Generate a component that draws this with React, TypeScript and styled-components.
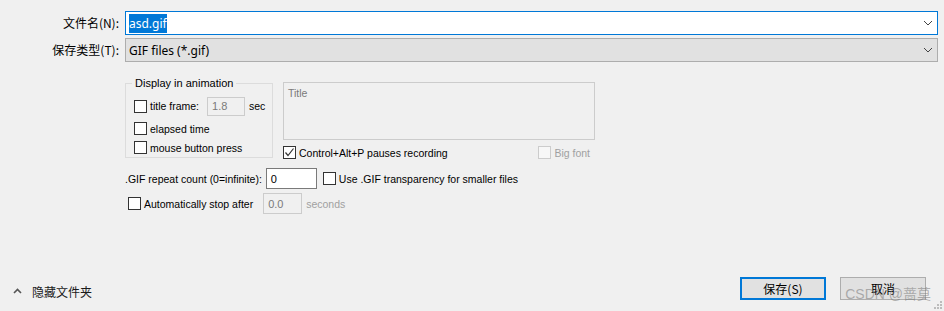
import React from "react";
import styled, { createGlobalStyle } from "styled-components";

const GlobalStyle = createGlobalStyle`
  html, body {
    margin: 0;
    padding: 0;
    background: #f0f0f0;
  }
  body {
    font-family: "Noto Sans", "Noto Sans CJK SC", sans-serif;
    color: #000;
  }
`;

const Dialog = styled.div`
  position: relative;
  width: 944px;
  height: 311px;
  box-sizing: border-box;
  display: flex;
  flex-direction: column;
  background: #f0f0f0;
`;

const FieldGrid = styled.div`
  display: grid;
  grid-template-columns: 119px 1fr;
  column-gap: 6px;
  row-gap: 3px;
  padding: 11px 6px 0 0;
`;

const FieldLabel = styled.label`
  text-align: right;
  font-family: "Noto Sans CJK SC", "Noto Sans", sans-serif;
  font-size: 12px;
  line-height: 24px;
  white-space: nowrap;
`;

const Combo = styled.div<{ $focused?: boolean }>`
  height: 24px;
  box-sizing: border-box;
  display: flex;
  align-items: center;
  padding: 0 4px 0 3px;
  border: 1px solid ${(p) => (p.$focused ? "#0078d7" : "#adadad")};
  background: ${(p) => (p.$focused ? "#ffffff" : "#e1e1e1")};
  font-family: "Noto Sans", "Noto Sans CJK SC", sans-serif;
  font-size: 12px;
`;

const ComboText = styled.span`
  flex: 1;
  white-space: nowrap;
`;

const Selected = styled.span`
  background: #0078d7;
  color: #fff;
  padding: 1px 0;
`;

const Chevron = () => (
  <svg width="10" height="6" viewBox="0 0 10 6">
    <path d="M1 1 L5 5 L9 1" fill="none" stroke="#444" strokeWidth="1" />
  </svg>
);

const Options = styled.div`
  font-family: "Liberation Sans", Arial, sans-serif;
  font-size: 10.5px;
  padding-left: 125px;
`;

const UpperRow = styled.div`
  display: flex;
  gap: 10px;
  margin-top: 20px;
`;

const GroupBox = styled.div`
  position: relative;
  width: 148px;
  height: 75px;
  margin-top: 1px;
  box-sizing: border-box;
  border: 1px solid #dcdcdc;
  padding: 12px 0 0 8px;
`;

const Legend = styled.span`
  position: absolute;
  top: -7px;
  left: 6px;
  padding: 0 3px;
  background: #f0f0f0;
  line-height: 13px;
  font-size: 11px;
`;

const CheckRow = styled.div<{ $h?: number; $gap?: number }>`
  display: flex;
  align-items: center;
  height: ${(p) => p.$h ?? 19}px;
  margin-top: ${(p) => p.$gap ?? 0}px;
  white-space: nowrap;
`;

const Box = styled.span<{ $disabled?: boolean }>`
  width: 13px;
  height: 13px;
  box-sizing: border-box;
  flex-shrink: 0;
  display: inline-flex;
  align-items: center;
  justify-content: center;
  border: 1px solid ${(p) => (p.$disabled ? "#cccccc" : "#333333")};
  background: ${(p) => (p.$disabled ? "#f7f7f7" : "#ffffff")};
  margin-right: 3px;
`;

const CheckText = styled.span<{ $disabled?: boolean }>`
  color: ${(p) => (p.$disabled ? "#a0a0a0" : "#000")};
`;

const Check = ({ checked, disabled, label }: { checked?: boolean; disabled?: boolean; label: string }) => (
  <>
    <Box $disabled={disabled}>
      {checked && (
        <svg width="11" height="11" viewBox="0 0 11 11">
          <path d="M1.5 5.5 L4 8.5 L9.5 1.5" fill="none" stroke="#333" strokeWidth="1.2" />
        </svg>
      )}
    </Box>
    <CheckText $disabled={disabled}>{label}</CheckText>
  </>
);

const NumBox = styled.div<{ $w: number; $h: number; $disabled?: boolean }>`
  width: ${(p) => p.$w}px;
  height: ${(p) => p.$h}px;
  box-sizing: border-box;
  display: flex;
  align-items: center;
  padding-left: 4px;
  border: 1px solid ${(p) => (p.$disabled ? "#cccccc" : "#7a7a7a")};
  background: ${(p) => (p.$disabled ? "#f0f0f0" : "#ffffff")};
  color: ${(p) => (p.$disabled ? "#7a7a7a" : "#000")};
  flex-shrink: 0;
  font-size: 11px;
`;

const Unit = styled.span<{ $disabled?: boolean }>`
  margin-left: 4px;
  color: ${(p) => (p.$disabled ? "#a0a0a0" : "#000")};
`;

const RightColumn = styled.div`
  width: 312px;
  display: flex;
  flex-direction: column;
`;

const TitleBox = styled.div`
  height: 58px;
  box-sizing: border-box;
  border: 1px solid #cccccc;
  padding: 4px 4px;
  color: #7a7a7a;
`;

const SplitRow = styled.div`
  display: flex;
  align-items: center;
  justify-content: space-between;
  height: 13px;
  margin-top: 6px;
  padding-right: 5px;
  white-space: nowrap;
`;

const Inline = styled.div`
  display: flex;
  align-items: center;
`;

const LineRow = styled.div<{ $top: number; $indent?: number }>`
  display: flex;
  align-items: center;
  height: 21px;
  margin-top: ${(p) => p.$top}px;
  padding-left: ${(p) => p.$indent ?? 0}px;
  white-space: nowrap;
`;

const RepeatLabel = styled.span`
  margin-right: 4px;
`;

const Spacer = styled.span<{ $w: number }>`
  display: inline-block;
  width: ${(p) => p.$w}px;
`;

const BottomBar = styled.div`
  margin-top: auto;
  margin-bottom: 11px;
  display: flex;
  align-items: center;
  height: 23px;
  padding: 0 18px 0 13px;
`;

const Toggle = styled.div`
  display: flex;
  align-items: center;
  gap: 10px;
  padding-top: 5px;
  font-family: "Noto Sans CJK SC", sans-serif;
  font-size: 12px;
  color: #1a1a1a;
`;

const Buttons = styled.div`
  margin-left: auto;
  display: flex;
  gap: 14px;
`;

const Button = styled.button<{ $default?: boolean }>`
  width: 86px;
  height: 23px;
  box-sizing: border-box;
  padding: 0;
  background: #e1e1e1;
  border: ${(p) => (p.$default ? "2px solid #0078d7" : "1px solid #adadad")};
  font-family: "Noto Sans CJK SC", sans-serif;
  font-size: 12px;
  color: #000;
`;

const Watermark = styled.div`
  position: absolute;
  right: 13px;
  bottom: 8px;
  font-family: "Liberation Sans", "Noto Sans CJK SC", sans-serif;
  font-size: 14px;
  color: rgba(120, 120, 120, 0.55);
  white-space: nowrap;
`;

const Grip = styled.svg`
  position: absolute;
  right: 2px;
  bottom: 2px;
`;

export default function App() {
  return (
    <>
      <GlobalStyle />
      <Dialog>
        <FieldGrid>
          <FieldLabel>文件名(N):</FieldLabel>
          <Combo $focused>
            <ComboText>
              <Selected>asd.gif</Selected>
            </ComboText>
            <Chevron />
          </Combo>
          <FieldLabel>保存类型(T):</FieldLabel>
          <Combo>
            <ComboText>GIF files (*.gif)</ComboText>
            <Chevron />
          </Combo>
        </FieldGrid>

        <Options>
          <UpperRow>
            <GroupBox>
              <Legend>Display in animation</Legend>
              <CheckRow $h={20}>
                <Check label="title frame:" />
                <Spacer $w={8} />
                <NumBox $w={38} $h={19} $disabled>1.8</NumBox>
                <Unit>sec</Unit>
              </CheckRow>
              <CheckRow $gap={3}>
                <Check label="elapsed time" />
              </CheckRow>
              <CheckRow>
                <Check label="mouse button press" />
              </CheckRow>
            </GroupBox>

            <RightColumn>
              <TitleBox>Title</TitleBox>
              <SplitRow>
                <Inline>
                  <Check checked label="Control+Alt+P pauses recording" />
                </Inline>
                <Inline>
                  <Check disabled label="Big font" />
                </Inline>
              </SplitRow>
            </RightColumn>
          </UpperRow>

          <LineRow $top={9}>
            <RepeatLabel>.GIF repeat count (0=infinite):</RepeatLabel>
            <NumBox $w={51} $h={21}>0</NumBox>
            <Spacer $w={6} />
            <Check label="Use .GIF transparency for smaller files" />
          </LineRow>

          <LineRow $top={4} $indent={3}>
            <Check label="Automatically stop after" />
            <Spacer $w={10} />
            <NumBox $w={39} $h={21} $disabled>0.0</NumBox>
            <Unit $disabled>seconds</Unit>
          </LineRow>
        </Options>

        <BottomBar>
          <Toggle>
            <svg width="9" height="6" viewBox="0 0 9 6">
              <path d="M1 5 L4.5 1.5 L8 5" fill="none" stroke="#555" strokeWidth="1.6" />
            </svg>
            <span>隐藏文件夹</span>
          </Toggle>
          <Buttons>
            <Button $default>保存(S)</Button>
            <Button>取消</Button>
          </Buttons>
        </BottomBar>

        <Watermark>CSDN @蔷莫</Watermark>
        <Grip width="8" height="8" viewBox="0 0 8 8">
          <rect x="6" y="0" width="2" height="2" fill="#bcbcbc" />
          <rect x="3" y="3" width="2" height="2" fill="#bcbcbc" />
          <rect x="6" y="3" width="2" height="2" fill="#bcbcbc" />
          <rect x="0" y="6" width="2" height="2" fill="#bcbcbc" />
          <rect x="3" y="6" width="2" height="2" fill="#bcbcbc" />
          <rect x="6" y="6" width="2" height="2" fill="#bcbcbc" />
        </Grip>
      </Dialog>
    </>
  );
}
